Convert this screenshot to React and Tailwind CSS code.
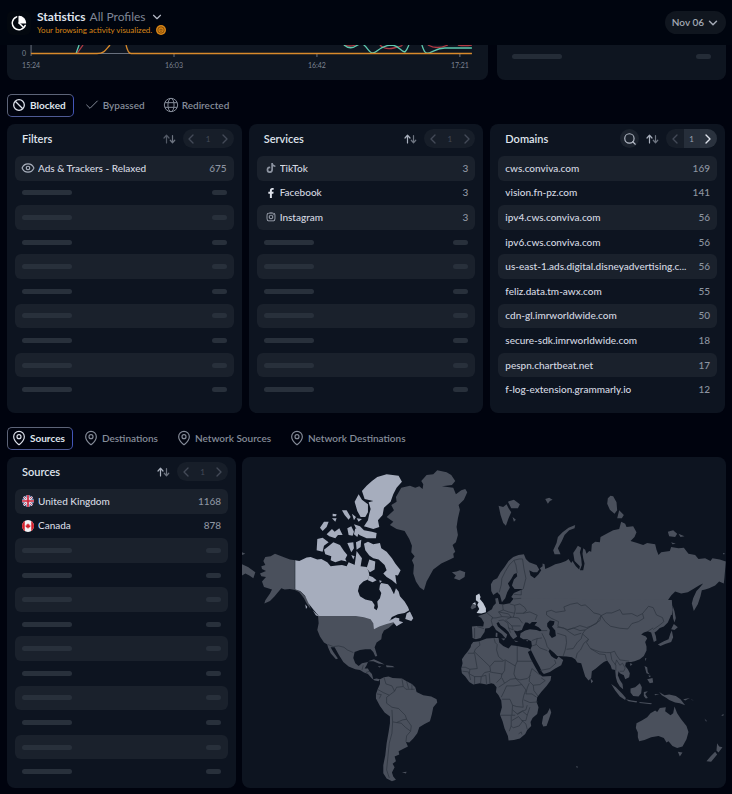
import { useState } from "react";
import { Check, ChevronDown, ChevronLeft, ChevronRight, Eye, MapPin, Search } from "lucide-react";
import { FaFacebookF, FaInstagram, FaTiktok } from "react-icons/fa";

const domains = [
  ["cws.conviva.com", 169],
  ["vision.fn-pz.com", 141],
  ["ipv4.cws.conviva.com", 56],
  ["ipv6.cws.conviva.com", 56],
  ["us-east-1.ads.digital.disneyadvertising.c...", 56],
  ["feliz.data.tm-awx.com", 55],
  ["cdn-gl.imrworldwide.com", 50],
  ["secure-sdk.imrworldwide.com", 18],
  ["pespn.chartbeat.net", 17],
  ["f-log-extension.grammarly.io", 12],
].map(([name, count]) => ({ name, count }));

/* ───────────── Icons ───────────── */
function PieIcon() {
  return (
    <svg viewBox="0 0 24 24" className="size-4" fill="none" stroke="currentColor" strokeWidth="2.2" aria-hidden="true">
      <path d="M8.500 2.800A10 10 0 1 0 21.400 15.500" strokeLinecap="round" />
      <path d="M12 12 18.500 18.500" strokeLinecap="round" />
      <path d="M12 2A10 10 0 0 1 22 12H12Z" fill="currentColor" strokeWidth="1.6" strokeLinejoin="round" />
    </svg>
  );
}

function BlockIcon() {
  return (
    <svg viewBox="0 0 24 24" className="size-4 text-[#dfe3ec]" fill="none" stroke="currentColor" strokeWidth="1.9" aria-hidden="true">
      <circle cx="12" cy="12" r="8" />
      <path d="M6.400 6.400 17.600 17.600" />
    </svg>
  );
}

function GridGlobeIcon() {
  return (
    <svg viewBox="0 0 24 24" className="size-4" fill="none" stroke="currentColor" strokeWidth="1.5" aria-hidden="true">
      <circle cx="12" cy="12" r="10" />
      <ellipse cx="12" cy="12" rx="4.6" ry="10" />
      <path d="M3 8.500H21M3 15.500H21" />
    </svg>
  );
}

function CoinIcon() {
  return (
    <svg viewBox="0 0 20 20" className="size-2.5" aria-hidden="true">
      <circle cx="10" cy="10" r="10" fill="#d98616" />
      <circle cx="10" cy="10" r="6.4" fill="none" stroke="#6b3c05" strokeWidth="1.6" />
      <path d="M7 8.6h6M7.2 11.4q2.8 2.4 5.6 0" fill="none" stroke="#6b3c05" strokeWidth="1.6" />
    </svg>
  );
}

function SortIcon() {
  return (
    <svg viewBox="0 0 26 20" className="h-2.5 w-[13px]" fill="none" strokeWidth="2.4" strokeLinecap="round" strokeLinejoin="round" aria-hidden="true">
      <path d="M7 18V3M2 8 7 2.5 12 8" stroke="currentColor" />
      <path d="M19 3V17M14.5 12.5 19 17.5 23.5 12.5" stroke="#6d7480" />
    </svg>
  );
}

function UkFlag() {
  return (
    <svg viewBox="0 0 24 24" className="size-3" aria-hidden="true">
      <clipPath id="uk"><circle cx="12" cy="12" r="12" /></clipPath>
      <g clipPath="url(#uk)">
        <path d="M0 0H24V24H0Z" fill="#3a4577" />
        <path d="M0 0 24 24M24 0 0 24" stroke="#e2e4ee" strokeWidth="4.6" />
        <path d="M0 0 24 24M24 0 0 24" stroke="#c8344b" strokeWidth="1.6" />
        <path d="M12 0V24M0 12H24" stroke="#e2e4ee" strokeWidth="6.4" />
        <path d="M12 0V24M0 12H24" stroke="#d0243a" strokeWidth="3.4" />
      </g>
    </svg>
  );
}

function CanadaFlag() {
  return (
    <svg viewBox="0 0 24 24" className="size-3" aria-hidden="true">
      <clipPath id="ca"><circle cx="12" cy="12" r="12" /></clipPath>
      <g clipPath="url(#ca)">
        <path d="M0 0H24V24H0Z" fill="#f3f3f6" />
        <path d="M0 0H5.5V24H0ZM18.5 0H24V24H18.5Z" fill="#d3202b" />
        <path d="M12 6.5 13.5 9 15 8.6 14.7 11 17 10.6 16.4 12.6 17.3 13.2 14 15.6H12.5V18H11.5V15.6H10L6.7 13.2 7.6 12.6 7 10.6 9.3 11 9 8.6 10.5 9Z" fill="#d3202b" />
      </g>
    </svg>
  );
}

/* ───────────── Lists ───────────── */
function Pager({ hasNext }) {
  return (
    <div className="flex h-[19px] w-[51px] items-stretch overflow-hidden rounded-full bg-[#171e29] text-[8px] text-[#434a57]">
      <button type="button" aria-label="Previous page" className="flex flex-1 items-center justify-center">
        <ChevronLeft className="size-4" />
      </button>
      <span className={hasNext ? "flex w-4 items-center justify-center bg-[#262e3a] text-[#9aa1ae]" : "flex w-4 items-center justify-center"}>1</span>
      <button
        type="button"
        aria-label="Next page"
        className={hasNext ? "flex flex-1 items-center justify-center bg-[#2a323e] text-[#dfe3ec]" : "flex flex-1 items-center justify-center"}
      >
        <ChevronRight className="size-4" />
      </button>
    </div>
  );
}

function StatCard({ title, items, rows = 10, search, hasNext, dimSort }) {
  const list = Array.from({ length: rows }, (_, i) => items[i]);

  return (
    <section className={rows === 12 ? "min-w-0 rounded-lg bg-[#0d1420] px-2 pb-1" : "min-w-0 rounded-lg bg-[#0d1420] px-2 pb-[11px]"}>
      <div className="flex h-8 items-center gap-[7px] pb-0.5 pl-[7px]">
        <h2 className="flex-1 text-[11px] font-semibold text-[#dfe3ec]">{title}</h2>
        {search && (
          <button type="button" aria-label="Search" className="flex size-[19px] items-center justify-center rounded-full bg-[#1b222d] text-[#b4bac6]">
            <Search className="size-3.5" />
          </button>
        )}
        <button type="button" aria-label="Sort" className={dimSort ? "text-[#525966]" : "text-[#a9b0bd]"}>
          <SortIcon />
        </button>
        <Pager hasNext={hasNext} />
      </div>
      <ul className={rows === 12 ? "grid min-h-[295px] auto-rows-fr" : "grid min-h-[246px] auto-rows-fr"}>
        {list.map((item, i) => (
          <li key={i} className="flex min-w-0 items-center gap-1 rounded-md px-[7px] text-[10px] font-medium odd:bg-[#1a212c]">
            {item ? (
              <>
                {item.icon}
                <span className="min-w-0 flex-1 truncate text-[#d5d9e2]">{item.name}</span>
                <span className="ml-1 text-[#8d94a1]">{item.count}</span>
              </>
            ) : (
              <>
                <span className="h-[5px] w-[50px] rounded-full bg-[#28303b]" />
                <span className="ml-auto h-[5px] w-[15px] rounded-full bg-[#28303b]" />
              </>
            )}
          </li>
        ))}
      </ul>
    </section>
  );
}

function Tabs({ tabs }) {
  const [active, setActive] = useState(0);

  return (
    <nav className="flex items-center gap-1.5">
      {tabs.map((tab, i) => (
        <button
          key={tab.label}
          type="button"
          onClick={() => setActive(i)}
          className={
            i === active
              ? "flex h-[23px] items-center gap-[3px] rounded-[5px] border border-[#5d6478] border-r-[#4356b8] border-b-[#4e5a94] pr-[7px] pl-[3px] text-[10px] font-bold text-[#dfe3ec]"
              : "flex h-[23px] items-center gap-[3px] rounded-[5px] border border-transparent pr-[7px] pl-[3px] text-[10px] font-semibold text-[#858c99]"
          }
        >
          {tab.icon}
          {tab.label}
        </button>
      ))}
    </nav>
  );
}

/* ───────────── Activity chart (bottom edge) ───────────── */
function ActivityChart() {
  return (
    <svg viewBox="0 0 481 35" className="block w-full" role="img" aria-label="Activity">
      <g fill="none" strokeWidth="1.3">
        <path d="M24 0V11M24 8.500H465M167 9V12M310 9V12M453 9V12" stroke="#6b7280" strokeWidth="1" />
        <path d="M70 8.500 76 0M337 0Q343 2 349 0M373 0Q378 5 387 3T395 0M421 0Q430 5 441 0M451 0Q458 1 465 0" stroke="#b03a44" />
        <path d="M69 8.500 72 0M337 0Q343 5 349 1T357 0C361 3 362 8 366 8 370 8 372 1 384 0 392 0 393 6 398 7Q400 5 402 0M415 0C417 6 418 9 422 8 428 6 430 3 438 3H465" stroke="#5fc9b0" />
        <path d="M24 8.500H90C98 8.500 99 4 103 0M119 0Q121 8.500 124 8.500H465" stroke="#d98a2b" />
      </g>
      <g fill="#7d8492" fontSize="7" textAnchor="middle">
        <text x="17" y="11.500">0</text>
        <text x="24" y="23">15:24</text>
        <text x="167" y="23">16:03</text>
        <text x="310" y="23">16:42</text>
        <text x="453" y="23">17:21</text>
      </g>
    </svg>
  );
}

/* ───────────── World map ───────────── */
function WorldMap() {
  return (
    <svg viewBox="6 6 1452 993" className="block h-auto w-full" role="img" aria-label="World map">
      <g fill="#4a505c">
        {/* Alaska, Chukotka tip and Greenland */}
        <path d="M165 316 150 314 130 306 105 296 92 304 76 306 70 318 76 330 64 334 66 342 78 348 60 356 64 364 78 366 66 380 72 396 84 400 96 404 90 416 76 436 73 446 90 438 104 424 112 414 124 400 134 404 150 402 165 405 178 412 192 430 200 446 212 462 206 440 196 418 180 404Z" />
        <path d="M6 292 16 296 6 300ZM6 328 24 336 46 352 40 370 28 362 16 356 6 362Z" />
        <path d="M440 186 462 166 454 150 470 140 468 126 484 98 510 92 526 98 538 94 548 102 550 88 544 78 560 60 580 58 592 46 620 52 634 60 646 78 636 90 606 94 640 98 648 118 664 106 676 102 682 112 672 134 656 150 660 164 654 190 650 216 654 240 648 262 638 270 646 290 640 296 642 308 630 314 604 326 580 344 570 362 560 380 552 406 540 398 528 380 520 356 522 330 516 316 524 304 514 292 516 272 508 252 494 228 470 222 450 210 460 200Z" />
        {/* Americas */}
        <g transform="translate(0 465)">
          <path d="M234 16 236 40 232 60 240 80 252 98 262 104 264 112 272 130 288 148 294 146 280 126 272 112 284 112 296 134 310 156 326 170 346 178 360 180 372 188 384 192 396 206 404 212 416 214 420 208 410 206 400 208 396 192 388 184 384 176 374 176 380 166 384 156 366 160 356 168 346 160 340 144 344 126 360 120 376 118 392 118 400 126 406 140 412 138 404 112 410 98 424 88 426 74 432 62 446 54 462 40 452 24 440 10Z" />
          <path d="M384 154 402 148 420 156 434 164 416 161 400 154ZM438 166 458 168 464 172 440 172ZM414 168 424 170 418 173Z" />
          <path d="M420 208 432 202 446 200 458 204 486 206 500 214 516 222 526 232 530 246 550 256 574 260 590 268 592 278 580 292 576 312 570 334 554 342 538 352 532 370 520 386 508 398 498 396 504 410 492 416 476 424 478 434 464 440 468 454 458 462 464 472 456 488 460 500 468 510 456 514 440 506 430 490 430 466 436 436 440 400 446 366 450 340 450 320 434 308 420 288 408 266 408 252 414 236 420 222ZM486 487 500 486 498 491Z" />
        </g>
        {/* Northern Eurasia and the Arctic islands */}
        <g transform="translate(600 0)">
          <path d="M153 388 160 376 172 370 182 352 194 336 206 318 220 306 236 300 252 298 258 312 268 322 290 330 298 344 292 352 280 352 268 346 272 362 284 370 296 358 304 346 300 340 308 334 308 326 314 328 316 342 330 336 346 328 362 324 378 318 386 312 394 324 398 318 404 328 408 334 418 344 420 334 404 318 400 294 408 282 414 272 424 278 420 292 424 310 426 330 420 346 430 346 434 326 430 310 428 296 430 280 436 284 440 296 448 288 454 290 456 268 466 260 480 262 482 246 500 236 520 226 538 222 544 200 556 206 560 216 580 214 590 232 584 246 572 258 592 264 610 270 622 264 646 268 650 284 656 300 664 292 690 288 694 276 716 280 732 278 746 296 766 300 776 312 796 310 812 318 818 310 840 314 858 320 854 368 852 386 838 380 826 392 808 400 796 404 786 406 782 424 774 448 762 468 756 446 760 430 770 408 778 400 790 386 780 390 764 400 744 412 724 416 706 410 694 422 680 442 692 448 698 462 696 480 222 455 222 432 214 426 222 414 250 402 224 402 216 392 222 374 232 364 230 354 222 358 214 372 204 386 210 398 202 412 196 430 186 442 180 420 172 412 160 420 154 408Z" />
          <path d="M176 152 190 156 200 148 206 160 214 172 206 190 198 212 190 204 182 180ZM204 140 222 134 240 148 234 160 214 160ZM218 186 228 194 222 200ZM316 132 328 128 338 134 330 138 324 146ZM406 210 404 220 388 226 374 240 366 258 354 280 362 298 344 298 340 286 350 264 354 246 368 232 386 218ZM512 122 520 124 530 142 532 166 524 176 510 164 502 146 504 130ZM538 166 552 180 546 190 532 190ZM684 230 700 226 712 236 706 246 688 244ZM716 236 734 244 722 246ZM694 262 708 266 698 268Z" />
          <path d="M36 352 50 350 60 346 76 352 74 366 58 376 42 370 48 362ZM92 458 98 446 108 448 108 458 96 464ZM850 294h4v4h-4Z" />
        </g>
        {/* Southern Eurasia, Africa and Oceania */}
        <g transform="translate(600 435)">
          <path d="M696 0 698 30 692 50 684 68 672 80 660 84 650 94 644 98 648 108 650 122 642 126 638 112 634 98 624 94 612 98 604 104 618 110 622 116 616 126 620 140 620 152 612 168 600 178 584 184 574 186 566 186 558 188 556 198 564 208 570 220 568 232 556 238 552 226 540 220 536 214 534 226 540 240 548 252 550 268 540 260 532 246 528 232 526 210 516 208 512 196 502 182 492 186 482 194 468 206 456 214 454 234 446 242 436 230 430 210 424 190 412 188 406 178 396 172 380 170 352 168 344 160 330 148 326 154 334 168 342 174 350 178 356 170 370 180 364 196 346 206 330 216 312 222 306 216 300 202 288 180 276 156 272 148 276 138 274 124 262 118 250 118 240 112 242 100 256 92 270 88 290 90 300 94 306 92 296 82 284 76 292 66 276 66 270 72 262 68 256 68 250 80 246 90 232 94 222 92 232 110 220 118 212 108 206 96 196 86 182 76 176 66 170 70 174 80 186 90 202 104 198 116 192 110 186 102 168 90 162 80 158 76 148 84 136 86 134 96 122 114 108 118 98 114 96 80 110 78 130 80 132 68 124 54 114 48 128 44 138 40 146 34 156 28 160 18 168 10 166 -4 174 -6 178 12 190 14 210 10 222 -5Z" />
          <path d="M100 126 118 124 140 116 162 114 176 114 178 128 190 138 206 146 214 136 232 138 250 142 264 144 274 150 264 156 272 176 284 198 298 222 308 230 334 228 332 242 320 258 304 276 292 292 290 306 296 322 292 342 278 354 272 366 274 378 262 390 256 402 240 416 222 420 206 422 204 408 194 386 188 364 180 344 186 322 184 302 176 286 168 276 170 262 162 252 154 250 140 254 120 250 100 254 88 246 76 230 66 220 64 206 68 190 66 178 74 166 84 154 92 142 94 134Z" />
          <path d="M330 324 334 338 326 362 320 378 310 380 306 370 310 348 322 340ZM452 236 460 244 454 250ZM168 98 173 100 172 112 167 110ZM184 116 196 116 192 122ZM222 122 236 124 228 126ZM258 122 266 120 262 125ZM570 190 578 192 572 198ZM616 174 620 176 616 184Z" />
          <path d="M698 16 704 34 708 54 704 68 700 56 698 36ZM702 72 714 82 704 90 694 88ZM696 92 700 112 694 126 676 132 662 138 654 134 672 124 686 118 692 100ZM614 198 622 202 624 216 630 224 620 220ZM622 238 638 234 640 248 630 250ZM626 226 634 228 628 232Z" />
          <path d="M514 252 528 262 548 282 558 294 556 300 540 290 526 272ZM558 298 576 302 592 304 590 308 566 304ZM598 306 636 310 634 313 600 309ZM572 266 586 262 600 250 606 262 604 280 596 290 580 288 572 278ZM612 276 624 274 616 282 624 294 618 296 612 288ZM644 282 658 284 646 286ZM658 276 674 286 688 284 708 288 722 298 736 316 720 310 706 308 688 300 680 294 666 286ZM730 298 750 294 736 302ZM754 298 762 302 756 300Z" />
          <path d="M590 370 606 362 622 352 632 340 646 332 652 336 660 324 678 322 676 334 692 346 700 340 704 320 712 340 724 358 740 378 746 396 740 418 728 440 712 444 698 438 686 424 680 428 672 414 656 408 634 412 614 420 598 424 594 412 594 398 588 384ZM714 456 728 458 720 470ZM832 430 838 440 848 442 836 458 830 452ZM826 456 832 464 814 486 800 484 812 470ZM408 499 414 500 412 505ZM794 356 802 364 798 364ZM844 346 852 342 850 348Z" />
        </g>
      </g>

      {/* Highlighted countries */}
      <g fill="#a6adbd">
        <path d="M165 316 178 318 200 308 212 306 232 314 244 312 262 322 272 334 290 332 306 330 320 334 326 322 345 330 352 324 362 334 380 336 386 350 388 360 384 374 370 380 358 392 354 408 360 424 376 434 396 438 404 450 402 460 410 466 414 456 412 440 420 430 424 414 418 404 420 390 424 384 444 388 452 398 462 418 468 400 476 410 480 424 494 440 504 456 508 466 494 474 474 478 456 486 448 498 466 488 478 490 478 498 490 502 470 514 460 502 440 507 418 515 402 523 400 505 392 493 372 487 348 483 238 483 230 476 220 464 206 446 196 424 182 410 165 404ZM500 476 510 470 520 490 514 498 496 492ZM218 466 226 474 238 484 228 482ZM196 448 202 456 198 462Z" />
        <path d="M366 108 380 92 396 78 412 66 440 58 476 62 486 80 470 98 460 118 452 140 432 158 428 180 414 196 418 216 400 222 372 214 384 196 388 176 392 162 386 142 400 138 374 132ZM344 140 356 118 366 134 384 148 384 172 376 186 362 186 352 168ZM342 208 360 214 372 226 396 230 410 234 408 250 380 250 358 240ZM306 166 320 166 332 186 326 194 314 180ZM336 176 348 186 342 196ZM278 176 290 178 288 184 278 184ZM276 190 290 190 286 200ZM240 218 252 200 266 200 260 216 248 228ZM260 238 276 222 284 230 298 220 308 240 294 240 286 250 268 244ZM322 220 334 214 342 230 338 242 326 240ZM346 220 358 230 352 246 342 238ZM350 190 366 192 356 200Z" />
        <path d="M232 252 248 248 266 262 252 272 248 290 230 286ZM252 284 270 270 280 262 300 270 312 288 322 300 316 312 320 320 304 316 286 322 272 316 274 304 256 298ZM322 264 340 262 342 280 334 292ZM348 262 364 254 362 276 350 284ZM372 266 384 260 400 268 420 264 424 280 440 290 456 310 466 326 482 346 474 362 466 360 470 388 456 376 440 366 430 356 440 346 434 330 416 314 400 310 388 302 376 286ZM334 300 344 304 340 314ZM350 288 366 310 362 334 344 330ZM388 314 406 320 404 344 390 352 380 340ZM386 362 398 366 410 376 398 382 384 376ZM418 376 426 378 420 384Z" />
        <path transform="translate(600 0)" fill="#c0c8d5" d="M108 422 118 416 122 426 120 432 130 444 138 460 138 472 124 476 110 474 118 462 112 450 116 442 108 436ZM98 446 106 442 108 450Z" />
      </g>

      {/* Inland waters */}
      <path transform="translate(600 435)" fill="#0d1420" d="M322 70 330 62 344 64 342 74 336 80 346 92 348 108 336 114 328 104 330 90 322 80Z" />

      {/* Borders */}
      <g fill="none" stroke="#2b323d" strokeWidth="2" strokeLinejoin="round">
        <path d="M165 316V404L182 410 196 424" />
        <path transform="translate(0 465)" d="M264 104 280 110 296 108 312 112 322 120 340 128M366 180 370 166M378 188 388 184M432 202 438 222 456 228 464 244 440 262 440 280 456 292 476 296 496 316 500 328 514 348 512 364 496 352 484 340 470 338 458 336 456 300M412 238 430 248 448 256M464 244 470 232 490 230 498 238 524 238M486 206 490 230M500 214 506 236M516 222 516 240M410 252 424 254 418 266M488 330 500 328M470 338 488 330M458 336 456 370 448 400 444 440 440 480 448 504M498 396 500 378 512 364" />
        <path transform="translate(600 0)" d="M178 412 184 390 186 370 196 350 208 330 222 316 228 330 232 354M222 316 238 312 248 312 252 340 258 370 250 402M222 432 244 430M222 418 244 420 244 404M320 470 334 466 348 472 376 468 372 456 392 448 412 444 424 452 436 450 448 460 462 474 478 478 484 482 476 494 470 506 452 514 440 518 420 512 400 520 384 524 370 520 354 514 356 500 334 490 320 480ZM484 482 500 474 516 474 540 464 548 478 576 476 592 484 608 476 612 490 596 500 576 506 564 522 540 520 512 514 496 500ZM608 476 626 454 640 458 650 480 668 488 672 500 660 510 640 524" />
        <path transform="translate(600 435)" d="M484 48 480 62 452 80 436 90 428 102 446 118 440 128 452 146 480 156 500 158 512 158 524 154 530 166 540 180 556 182 568 184M452 146 478 162 496 164 500 180M446 118 432 130 422 150 412 160 408 176M370 168 376 150 380 128 378 108 352 100M380 148 400 146 412 128 424 116 428 102M352 82 372 84 388 96 404 106 424 100M384 90 400 84 420 92 436 90M306 100 316 120 322 140 330 150M276 122 292 116 306 114M276 138 290 134 300 144 322 152M292 116 288 134M306 92 322 92M300 212 330 206 348 190 344 180M512 158 516 180 528 196 528 212M530 180 540 196 548 190 556 204 552 214 540 214M530 180 526 196M624 94 640 84" />
        <path transform="translate(600 435)" d="M112 80 132 86M104 84 104 114M140 38 150 46 158 52 154 62 158 76M188 14 190 30 176 36 186 50 168 54 156 54M190 30 206 36 224 40 226 28 224 16 210 12M224 16 240 12 254 22 260 32 250 40 228 40M224 40 220 52 236 54 248 70M250 40 270 36 292 46 286 60M200 58 214 52M220 52 214 52 186 50M196 60 204 66 216 78 242 78M176 62 190 60 204 70 206 84 220 90 216 78M206 84 212 98M176 36 206 42 214 52" />
        <path transform="translate(600 435)" d="M118 124 120 136 106 148 102 160 84 160M104 156 150 200 164 184 190 184M172 134 170 150 176 170 190 182M162 114 166 128 172 134M232 138V184H276M190 182 196 180 226 198 232 184M226 198 222 222 228 236M196 182 194 212 186 224M104 160 112 206 90 208 76 202 66 202M150 200 152 214 134 218 126 228M150 216 160 218 186 222 184 234 170 248M124 230 122 250M138 226 140 252M148 220 150 250M104 230 104 252M68 214 86 216 92 240M90 208 88 222 104 230 124 230 138 226M186 234 194 250 176 262M194 250 212 238 228 236 246 254 222 258 200 258M228 236 240 240 262 236 272 226M276 206 296 222 304 226M276 206 270 226 268 244 280 256 300 254 316 242 304 234M280 256 282 272 294 288M268 250 262 264 258 282 276 282 290 292M200 258 192 276 184 292M186 298 210 298 218 316 230 320 250 322 248 304 252 286 258 270 246 254M252 300 270 308 294 306M180 346H226M218 316 216 346M218 330 232 342 246 334 258 330 262 316M214 348V378L208 394M216 362 236 350 248 364 238 378 220 384 214 378M232 344 248 334 262 346 258 362 246 362M262 346 270 322M246 362 258 372 262 388M236 402 244 396 246 404" />
      </g>
    </svg>
  );
}

export default function App() {
  return (
    <div className="min-h-screen bg-[#00030e] pb-1.5 font-['Lato','Open_Sans',sans-serif] text-[#dfe3ec]">
      <header className="flex h-[45px] items-center gap-1.5 bg-[#00050f] pr-1.5 pl-[7px]">
        <div className="flex size-6 items-center justify-center rounded-md bg-[#03080f] text-white">
          <PieIcon />
        </div>
        <div className="flex-1">
          <div className="flex items-center gap-1 text-[12px] leading-[14px]">
            <h1 className="font-bold">Statistics</h1>
            <button type="button" className="flex items-center gap-1 text-[#7f8694]">
              All Profiles
              <ChevronDown className="size-3.5 text-[#b4bac6]" />
            </button>
          </div>
          <p className="flex items-center gap-1 text-[8px] leading-3 text-[#d98616]">
            Your browsing activity visualized.
            <CoinIcon />
          </p>
        </div>
        <button type="button" className="flex h-[23px] items-center gap-0.5 rounded-full bg-[#10161f] pr-1.5 pl-[7px] text-[10px] font-semibold text-[#a3a9b5]">
          Nov 06
          <ChevronDown className="size-3.5" strokeWidth={2.5} />
        </button>
      </header>

      <main className="pr-1.5 pl-[7px]">
        <div className="grid grid-cols-[21fr_10fr] gap-[9px]">
          <div className="rounded-b-lg bg-[#0e1520]">
            <ActivityChart />
          </div>
          <div className="flex items-start justify-between rounded-b-lg bg-[#0e1520] px-[15px] pt-[9px]">
            <span className="h-[5px] w-[50px] rounded-full bg-[#242c37]" />
            <span className="h-[5px] w-[15px] rounded-full bg-[#242c37]" />
          </div>
        </div>

        <div className="pt-3.5 pb-[7px]">
          <Tabs
            tabs={[
              { label: "Blocked", icon: <BlockIcon /> },
              { label: "Bypassed", icon: <Check className="size-4" strokeWidth={1.5} /> },
              { label: "Redirected", icon: <GridGlobeIcon /> },
            ]}
          />
        </div>
        <div className="grid grid-cols-3 gap-[7px] pr-px">
          <StatCard
            title="Filters"
            dimSort
            items={[{ name: "Ads & Trackers - Relaxed", count: 675, icon: <Eye className="-mx-px size-3.5 text-[#a9b0bd]" /> }]}
          />
          <StatCard
            title="Services"
            items={[
              { name: "TikTok", count: 3, icon: <FaTiktok className="ml-0.5 size-2.5 text-[#8d94a1]" /> },
              { name: "Facebook", count: 3, icon: <FaFacebookF className="ml-0.5 size-2.5" /> },
              { name: "Instagram", count: 3, icon: <FaInstagram className="ml-0.5 size-2.5 text-[#b4bac6]" /> },
            ]}
          />
          <StatCard title="Domains" search hasNext items={domains} />
        </div>

        <div className="pt-3.5 pb-[7px]">
          <Tabs
            tabs={["Sources", "Destinations", "Network Sources", "Network Destinations"].map((label) => ({
              label,
              icon: <MapPin className="size-4" strokeWidth={1.75} />,
            }))}
          />
        </div>
        <div className="grid grid-cols-[9fr_19fr] gap-1.5">
          <StatCard
            title="Sources"
            rows={12}
            items={[
              { name: "United Kingdom", count: 1168, icon: <UkFlag /> },
              { name: "Canada", count: 878, icon: <CanadaFlag /> },
            ]}
          />
          <div className="overflow-hidden rounded-lg bg-[#0d1420]">
            <WorldMap />
          </div>
        </div>
      </main>
    </div>
  );
}
